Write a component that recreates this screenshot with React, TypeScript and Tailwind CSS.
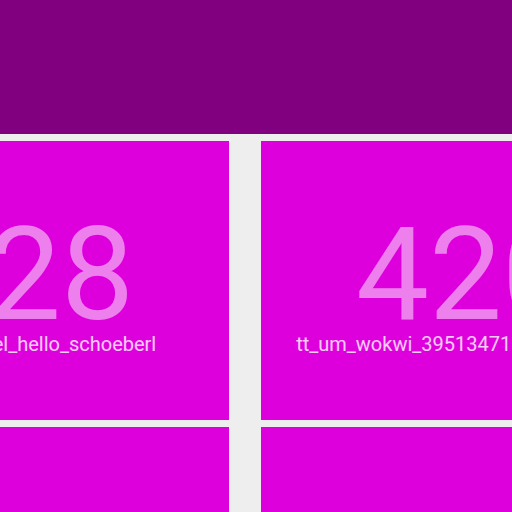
const tiles = [
  { count: "128", name: "tt_um_model_hello_schoeberl" },
  { count: "420", name: "tt_um_wokwi_3951347158234337291" },
];

export default function App() {
  return (
    <div className="w-[512px] h-[512px] overflow-hidden bg-[#eeeeee] font-['Roboto',sans-serif]">
      <div className="h-[134px] bg-[#800080]" />
      <div className="mt-[7px] ml-[-180px] grid grid-cols-[409px_409px] gap-x-[32px] gap-y-[7px]">
        {tiles.map(({ count, name }, index) => (
          <div key={index} className="h-[279px] bg-[#dd00dd] flex flex-col items-center pt-[79px]">
            <div className="text-[130px] leading-[110px] text-white/50 whitespace-nowrap">{count}</div>
            <div className="mt-[2px] text-[20px] leading-[24px] text-white/80 whitespace-nowrap">{name}</div>
          </div>
        ))}
        <div className="h-[279px] bg-[#dd00dd]" />
        <div className="h-[279px] bg-[#dd00dd]" />
      </div>
    </div>
  );
}
